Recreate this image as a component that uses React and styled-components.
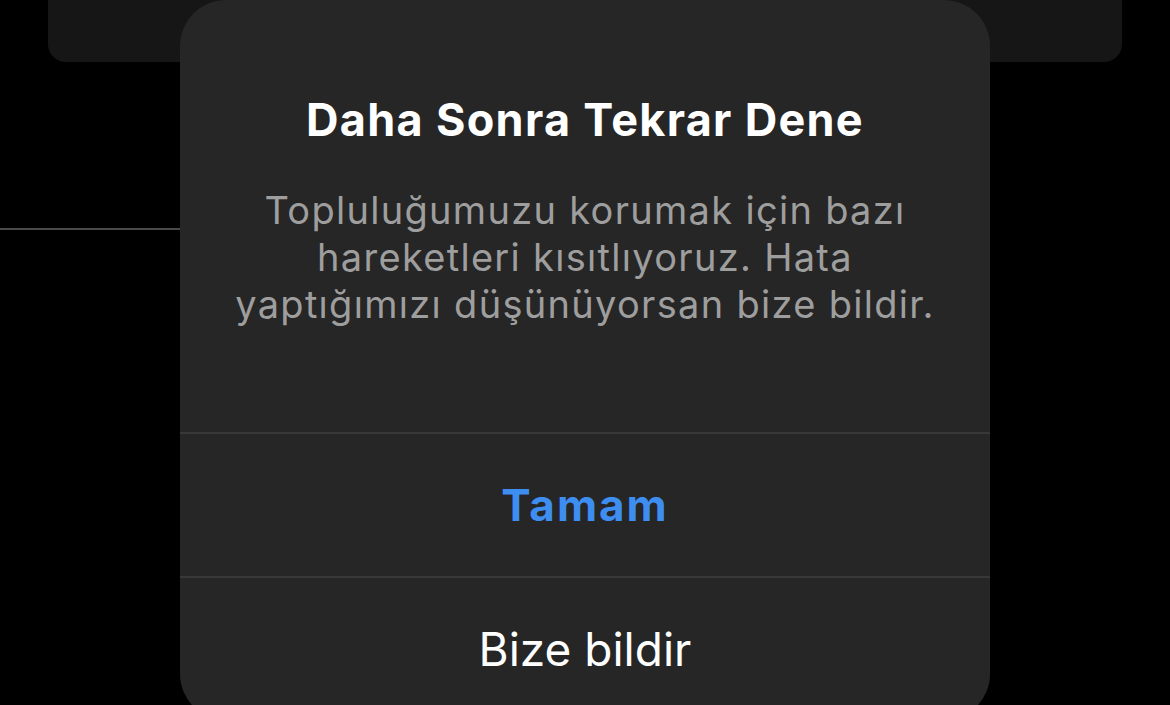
import React from "react";
import styled, { createGlobalStyle } from "styled-components";

const Global = createGlobalStyle`
  html, body { margin: 0; padding: 0; background: #000; }
  body { font-family: Inter, "Noto Sans", sans-serif; -webkit-font-smoothing: antialiased; }
  #root { width: 1170px; height: 705px; overflow: hidden; }
`;

const Screen = styled.div`
  position: relative;
  width: 1170px;
  height: 705px;
  background: #000;
  overflow: hidden;
`;

const TopCard = styled.div`
  margin: 0 48px;
  height: 62px;
  background: #161616;
  border-radius: 0 0 18px 18px;
`;

const Divider = styled.div`
  margin-top: 166px;
  width: 420px;
  height: 2px;
  background: #4a4a4a;
`;

const Dialog = styled.div`
  position: absolute;
  left: 180px;
  top: 0;
  width: 810px;
  height: 720px;
  background: #262626;
  border-radius: 46px;
  display: flex;
  flex-direction: column;
  overflow: hidden;
`;

const Message = styled.div`
  height: 432px;
  padding-top: 94px;
  box-sizing: border-box;
  display: flex;
  flex-direction: column;
  align-items: center;
  text-align: center;
`;

const Title = styled.h2`
  margin: 0;
  font-size: 45px;
  line-height: 52px;
  font-weight: 700;
  color: #fff;
  letter-spacing: 1.3px;
`;

const Body = styled.p`
  margin: 41px 0 0;
  font-size: 38px;
  line-height: 47px;
  font-weight: 400;
  color: #9e9e9e;
  letter-spacing: 1.3px;
`;

const Line = styled.span`
  display: block;
  white-space: nowrap;
`;

const Action = styled.button`
  border: 0;
  border-top: 2px solid #383838;
  background: transparent;
  height: 144px;
  flex: 0 0 auto;
  width: 100%;
  display: flex;
  align-items: center;
  justify-content: center;
  font-family: inherit;
  font-size: ${(p) => (p.$primary ? "44px" : "46px")};
  font-weight: ${(p) => (p.$primary ? 700 : 400)};
  letter-spacing: ${(p) => (p.$primary ? "2px" : "0")};
  color: ${(p) => (p.$primary ? "#3d8ef0" : "#fff")};
  padding: 0;
  cursor: pointer;
`;

export default function App() {
  return (
    <>
      <Global />
      <Screen>
        <TopCard />
        <Divider />
        <Dialog>
          <Message>
            <Title>Daha Sonra Tekrar Dene</Title>
            <Body>
              <Line>Topluluğumuzu korumak için bazı</Line>
              <Line>hareketleri kısıtlıyoruz. Hata</Line>
              <Line>yaptığımızı düşünüyorsan bize bildir.</Line>
            </Body>
          </Message>
          <Action $primary>Tamam</Action>
          <Action>Bize bildir</Action>
        </Dialog>
      </Screen>
    </>
  );
}
